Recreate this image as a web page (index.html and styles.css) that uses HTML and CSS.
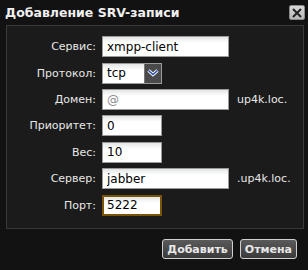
FILE: index.html
```html
<!DOCTYPE html>
<html lang="ru">
<head>
    <meta charset="UTF-8">
    <title>Добавление SRV-записи</title>
    <link rel="stylesheet" href="styles.css">
</head>
<body>
    <div class="dialog">
        <div class="titlebar">
            <span class="title">Добавление SRV-записи</span>
            <span class="close">
                <svg width="10" height="10" viewBox="0 0 10 10"><path d="M1 1L9 9M9 1L1 9" stroke="#222" stroke-width="2"/></svg>
            </span>
        </div>

        <div class="panel">
            <label>Сервис:</label>
            <div class="field"><input class="wide" type="text" value="xmpp-client"></div>

            <label>Протокол:</label>
            <div class="field">
                <span class="select">
                    <span class="select-value">tcp</span>
                    <span class="select-arrow">
                        <svg width="12" height="8" viewBox="0 0 12 8"><path d="M1.5 1.5L6 5.5L10.5 1.5" fill="none" stroke="#fff" stroke-width="3.2"/><path d="M1.5 1.5L6 5.5L10.5 1.5" fill="none" stroke="#2f4fae" stroke-width="1.6"/></svg>
                    </span>
                </span>
            </div>

            <label>Домен:</label>
            <div class="field"><input class="wide hint" type="text" value="@"><span class="suffix">up4k.loc.</span></div>

            <label>Приоритет:</label>
            <div class="field"><input class="short" type="text" value="0"></div>

            <label>Вес:</label>
            <div class="field"><input class="short" type="text" value="10"></div>

            <label>Сервер:</label>
            <div class="field"><input class="wide" type="text" value="jabber"><span class="suffix">.up4k.loc.</span></div>

            <label>Порт:</label>
            <div class="field"><input class="short focus" type="text" value="5222"></div>
        </div>

        <div class="buttons">
            <button class="btn">Добавить</button>
            <button class="btn">Отмена</button>
        </div>
    </div>
</body>
</html>
```

FILE: styles.css
```css
body {
    margin: 0;
    background-color: #121212;
    font-family: "DejaVu Sans", Verdana, sans-serif;
    font-size: 11px;
    color: #e8e8e8;
}

.dialog {
    width: 308px;
    height: 270px;
}

.titlebar {
    display: flex;
    justify-content: space-between;
    align-items: center;
    height: 25px;
    padding: 0 3px 0 5px;
}

.title {
    font-weight: bold;
    font-size: 12.5px;
    color: #f0f0f0;
}

.close {
    display: flex;
    align-items: center;
    justify-content: center;
    width: 14px;
    height: 13px;
    background: linear-gradient(#d8d8d8, #b8b8b8);
    border: 1px solid #8a8a8a;
    border-radius: 2px;
}

.panel {
    margin: 0 4px 0 6px;
    height: 180px;
    padding: 10px 0 12px;
    border: 1px solid #3a3a3a;
    background-color: #1b1b1b;
    display: grid;
    grid-template-columns: 89px auto;
    column-gap: 6px;
    row-gap: 5px;
    align-items: center;
}

label {
    text-align: right;
}

.field {
    display: flex;
    align-items: center;
}

input {
    box-sizing: border-box;
    height: 21px;
    padding: 0 4px;
    border: 1px solid #9a9a9a;
    background: linear-gradient(#e4e6e6, #ffffff 6px);
    font-family: "DejaVu Sans", Verdana, sans-serif;
    font-size: 12px;
    color: #000;
    outline: none;
}

.wide {
    width: 127px;
}

.short {
    width: 60px;
}

.hint {
    color: #8a8a8a;
}

.focus {
    border: 2px solid #7a5208;
    padding: 0 3px;
}

.suffix {
    margin-left: 8px;
}

.select {
    display: flex;
    box-sizing: border-box;
    width: 60px;
    height: 21px;
    border: 1px solid #9a9a9a;
}

.select-value {
    flex: 1;
    padding-left: 4px;
    line-height: 19px;
    font-size: 12px;
    color: #000;
    background: linear-gradient(#e4e6e6, #ffffff 6px);
}

.select-arrow {
    display: flex;
    align-items: center;
    justify-content: center;
    width: 16px;
    background-color: #4a4a4a;
    border-left: 1px solid #777;
}

.buttons {
    display: flex;
    justify-content: flex-end;
    gap: 7px;
    padding: 10px 11px 0 0;
}

.btn {
    height: 20px;
    padding: 0 4px;
    border: 1px solid #cfcfcf;
    border-radius: 3px;
    background: linear-gradient(#5a5a5a, #3a3a3a);
    color: #e8e8e8;
    font-family: "DejaVu Sans", Verdana, sans-serif;
    font-weight: bold;
    font-size: 11px;
}
```
